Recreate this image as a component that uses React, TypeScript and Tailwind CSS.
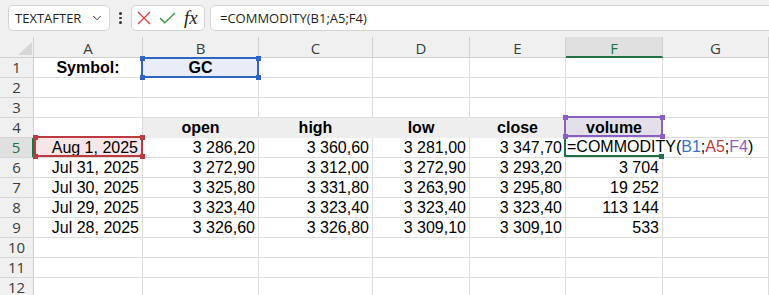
import React from "react";
import { ChevronDown } from "lucide-react";

const GRID = "grid grid-cols-[34px_109px_116px_114px_97px_96px_97px_1fr]";
const CELLFONT = "font-['Liberation_Sans',Arial,sans-serif] text-[16px] text-black";
const HEADFONT = "font-['Open_Sans',sans-serif] text-[15px]";

function Handles({ cls }: { cls: string }) {
  return (
    <>
      <span className={`absolute -top-[3.5px] -left-[3.5px] w-[5px] h-[5px] ${cls}`} />
      <span className={`absolute -top-[3.5px] -right-[3.5px] w-[5px] h-[5px] ${cls}`} />
      <span className={`absolute -bottom-[3.5px] -left-[3.5px] w-[5px] h-[5px] ${cls}`} />
      <span className={`absolute -bottom-[3.5px] -right-[3.5px] w-[5px] h-[5px] ${cls}`} />
    </>
  );
}

function ColHead({ l, active }: { l: string; active?: boolean }) {
  if (active)
    return (
      <div className={`h-[21px] pt-[3px] bg-[#e0e0e0] border-r border-r-[#d0d0d0] border-b-2 border-b-[#1e7145] flex items-center justify-center text-[#1e7145] ${HEADFONT}`}>
        {l}
      </div>
    );
  return (
    <div className={`h-[21px] pt-[3px] bg-[#f0f0f0] border-r border-b border-[#d0d0d0] flex items-center justify-center text-[#3c3c3c] ${HEADFONT}`}>
      {l}
    </div>
  );
}

function RowHead({ n, active }: { n: number; active?: boolean }) {
  if (active)
    return (
      <div className={`h-[20px] bg-[#e0e0e0] border-b border-b-[#d6d6d6] border-r-2 border-r-[#1e7145] flex items-center justify-center text-[#1e7145] ${HEADFONT}`}>
        {n}
      </div>
    );
  return (
    <div className={`h-[20px] bg-[#f0f0f0] border-b border-b-[#d6d6d6] border-r border-r-[#d0d0d0] flex items-center justify-center text-[#3c3c3c] ${HEADFONT}`}>
      {n}
    </div>
  );
}

function C({ children, r, c, b }: { children?: React.ReactNode; r?: boolean; c?: boolean; b?: boolean }) {
  return (
    <div
      className={`h-[20px] border-r border-b border-[#dcdcdc] flex items-center whitespace-nowrap ${CELLFONT} ${
        r ? "justify-end pr-[3px]" : c ? "justify-center" : "justify-start pl-[2px]"
      } ${b ? "font-bold" : ""}`}
    >
      {children}
    </div>
  );
}

function Gray({ children }: { children?: React.ReactNode }) {
  return (
    <div className={`h-[20px] bg-[#eeeeee] border-r border-b border-[#eeeeee] flex items-center justify-center font-bold whitespace-nowrap ${CELLFONT}`}>
      {children}
    </div>
  );
}

const data: [string, string, string, string, string, string][] = [
  ["Jul 31, 2025", "3 272,90", "3 312,00", "3 272,90", "3 293,20", "3 704"],
  ["Jul 30, 2025", "3 325,80", "3 331,80", "3 263,90", "3 295,80", "19 252"],
  ["Jul 29, 2025", "3 323,40", "3 323,40", "3 323,40", "3 323,40", "113 144"],
  ["Jul 28, 2025", "3 326,60", "3 326,80", "3 309,10", "3 309,10", "533"],
];

export default function App() {
  return (
    <div className="w-[769px] h-[295px] overflow-hidden bg-white">
      {/* formula bar */}
      <div className="h-[37px] bg-[#f0f0f0] flex items-start pt-[5px] font-['Open_Sans',sans-serif] text-[13px] text-[#1f1f1f]">
        <div className="ml-[8px] w-[102px] h-[26px] bg-white border border-[#d4d4d4] rounded-[5px] flex items-center justify-between pl-[6px] pr-[5px]">
          <span className="leading-none">TEXTAFTER</span>
          <ChevronDown size={14} strokeWidth={1.6} color="#333" />
        </div>
        <div className="w-[21px] h-[26px] flex flex-col items-center justify-center gap-[2px]">
          <span className="w-[2.5px] h-[2.5px] rounded-full bg-[#333]" />
          <span className="w-[2.5px] h-[2.5px] rounded-full bg-[#333]" />
          <span className="w-[2.5px] h-[2.5px] rounded-full bg-[#333]" />
        </div>
        <div className="w-[74px] h-[26px] bg-white border border-[#d4d4d4] rounded-[5px] flex items-center pl-[5px]">
          <svg width="14" height="14" viewBox="0 0 14 14">
            <path d="M1 1L13 13M13 1L1 13" stroke="#e2403f" strokeWidth="1.3" fill="none" />
          </svg>
          <svg width="17" height="12" viewBox="0 0 17 12" className="ml-[8px]">
            <path d="M1 6L5.8 10.8L16 1" stroke="#3d9a4c" strokeWidth="1.4" fill="none" />
          </svg>
          <span className="ml-[8px] font-['Liberation_Serif',serif] italic text-[19px] leading-none text-[#222] -mt-[2px]">
            fx
          </span>
        </div>
        <div className="ml-[5px] flex-1 -mr-[6px] h-[26px] bg-white border border-[#d4d4d4] rounded-[5px] flex items-center pl-[9px]">
          <span className="leading-none">=COMMODITY(B1;A5;F4)</span>
        </div>
      </div>

      {/* sheet */}
      <div className={GRID}>
        {/* header row */}
        <div className="h-[21px] bg-[#f0f0f0] border-r border-b border-[#d0d0d0] flex items-end justify-end pr-[1px] pb-[2px]">
          <svg width="14" height="13" viewBox="0 0 14 13">
            <path d="M14 0L14 13L0 13Z" fill="#d6d6d6" />
          </svg>
        </div>
        <ColHead l="A" />
        <ColHead l="B" />
        <ColHead l="C" />
        <ColHead l="D" />
        <ColHead l="E" />
        <ColHead l="F" active />
        <ColHead l="G" />

        {/* row 1 */}
        <RowHead n={1} />
        <C c b>Symbol:</C>
        <div className={`relative h-[20px] bg-[#e8edf7] border-r border-b border-[#dcdcdc] flex items-center justify-center font-bold ${CELLFONT}`}>
          GC
          <div className="absolute z-10 -top-[1px] -left-[2px] -right-[1px] -bottom-[1px] border-2 border-[#2e66c2]">
            <Handles cls="bg-[#2e66c2]" />
          </div>
        </div>
        <C />
        <C />
        <C />
        <C />
        <C />

        {/* rows 2,3 */}
        {[2, 3].map((n) => (
          <React.Fragment key={n}>
            <RowHead n={n} />
            <C />
            <C />
            <C />
            <C />
            <C />
            <C />
            <C />
          </React.Fragment>
        ))}

        {/* row 4 */}
        <RowHead n={4} />
        <C />
        <Gray>open</Gray>
        <Gray>high</Gray>
        <Gray>low</Gray>
        <Gray>close</Gray>
        <div className={`relative h-[20px] bg-[#e3e0ea] border-r border-b border-[#e3e0ea] flex items-center justify-center font-bold ${CELLFONT}`}>
          volume
          <div className="absolute z-10 -top-[2px] -left-[2px] -right-[1px] bottom-0 border-2 border-[#8b5ec4]">
            <Handles cls="bg-[#8b5ec4]" />
          </div>
        </div>
        <C />

        {/* row 5 */}
        <RowHead n={5} active />
        <div className={`relative h-[20px] bg-[#f7e6e7] border-r border-b border-[#dcdcdc] flex items-center justify-end pr-[4px] ${CELLFONT}`}>
          Aug 1, 2025
          <div className="absolute z-10 -top-[2px] left-0 -right-[1px] bottom-0 border-2 border-[#bd3a40]">
            <Handles cls="bg-[#bd3a40]" />
          </div>
        </div>
        <C r>3 286,20</C>
        <C r>3 360,60</C>
        <C r>3 281,00</C>
        <C r>3 347,70</C>
        <div className={`relative h-[20px] border-r border-b border-[#dcdcdc] ${CELLFONT}`}>
          <div className="absolute z-[5] left-0 top-0 bottom-[1px] bg-white flex items-center whitespace-nowrap pl-[1px] pr-[6px]">
            =COMMODITY(<span className="text-[#3b6fc8]">B1</span>;<span className="text-[#c4393d]">A5</span>;
            <span className="text-[#8b5ec4]">F4</span>)
          </div>
          <div className="absolute z-[6] top-0 -left-[2px] right-[1px] bottom-0 border-l-2 border-b-2 border-[#1e7145]" />
          <span className="absolute z-[7] -bottom-[2px] -right-[2px] w-[5px] h-[5px] bg-[#1e7145]" />
        </div>
        <C />

        {/* rows 6-9 */}
        {data.map((d, i) => (
          <React.Fragment key={i}>
            <RowHead n={i + 6} />
            <C r>{d[0]}</C>
            <C r>{d[1]}</C>
            <C r>{d[2]}</C>
            <C r>{d[3]}</C>
            <C r>{d[4]}</C>
            <C r>{d[5]}</C>
            <C />
          </React.Fragment>
        ))}

        {/* rows 10-12 */}
        {[10, 11, 12].map((n) => (
          <React.Fragment key={n}>
            <RowHead n={n} />
            <C />
            <C />
            <C />
            <C />
            <C />
            <C />
            <C />
          </React.Fragment>
        ))}
      </div>
    </div>
  );
}
